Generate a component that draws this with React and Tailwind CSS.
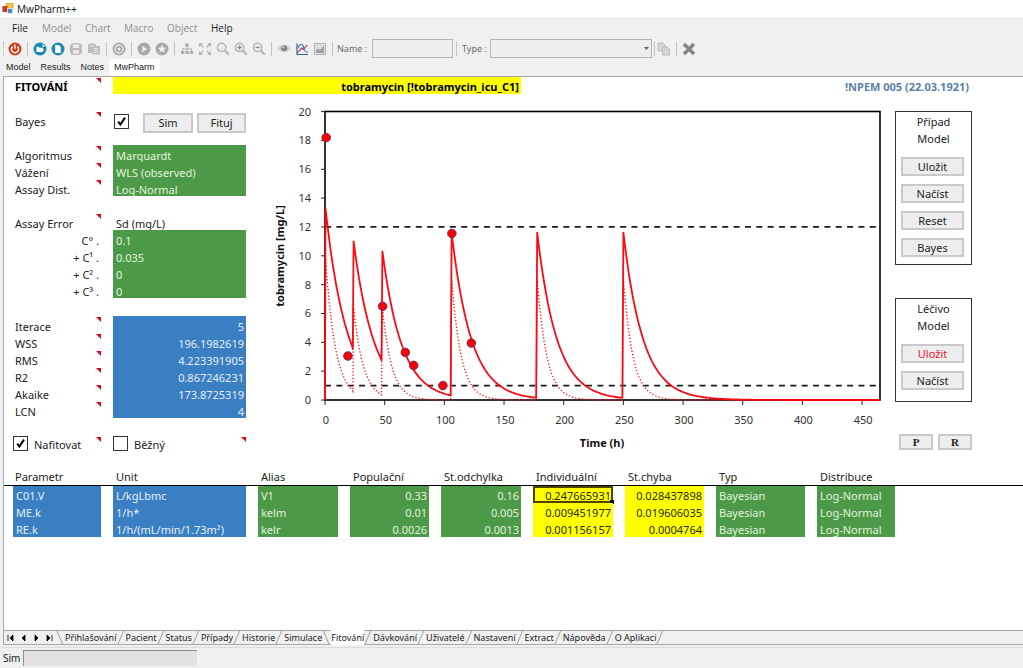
import { useState } from 'react';
import clsx from 'clsx';

const menus = [
  { label: 'File', on: true, cls: 'w-[30px]' },
  { label: 'Model', cls: 'w-[43px]' },
  { label: 'Chart', cls: 'w-[39px]' },
  { label: 'Macro', cls: 'w-[43px]' },
  { label: 'Object', cls: 'w-[44px]' },
  { label: 'Help', on: true, cls: 'w-[30px]' },
];

const views = ['Model', 'Results', 'Notes', 'MwPharm'];

const sheets = [
  'Přihlašování', 'Pacient', 'Status', 'Případy', 'Historie', 'Simulace', 'Fitování',
  'Dávkování', 'Uživatelé', 'Nastavení', 'Extract', 'Nápověda', 'O Aplikaci',
];

const errorTerms = [
  { label: 'C° .', value: '0.1' },
  { label: '+ C¹ .', value: '0.035' },
  { label: '+ C² .', value: '0' },
  { label: '+ C³ .', value: '0' },
];

const stats = [
  { label: 'Iterace', value: '5' },
  { label: 'WSS', value: '196.1982619' },
  { label: 'RMS', value: '4.223391905' },
  { label: 'R2', value: '0.867246231' },
  { label: 'Akaike', value: '173.8725319' },
  { label: 'LCN', value: '4' },
];

const columns = [
  { label: 'Parametr', col: 'w-[109px]', cell: 'bg-[#3a7fc1] text-[#e4eefa]' },
  { label: 'Unit', col: 'w-[145px]', cell: 'bg-[#3a7fc1] text-[#e4eefa]' },
  { label: 'Alias', col: 'w-[92px]', cell: 'bg-[#4c9a48] text-[#e2f3dc]' },
  { label: 'Populační', col: 'w-[91px]', cell: 'bg-[#4c9a48] text-[#e2f3dc] text-right' },
  { label: 'St.odchylka', col: 'w-[92px]', cell: 'bg-[#4c9a48] text-[#e2f3dc] text-right' },
  { label: 'Individuální', col: 'w-[92px]', cell: 'bg-[#ffff00] text-[#2b2b00] text-right' },
  { label: 'St.chyba', col: 'w-[91px]', cell: 'bg-[#ffff00] text-[#2b2b00] text-right' },
  { label: 'Typ', col: 'w-[101px]', cell: 'bg-[#4c9a48] text-[#e2f3dc]' },
  { label: 'Distribuce', col: 'w-[90px]', cell: 'bg-[#4c9a48] text-[#e2f3dc]' },
];

const params = [
  ['C01.V', 'L/kgLbmc', 'V1', '0.33', '0.16', '0.247665931', '0.028437898', 'Bayesian', 'Log-Normal'],
  ['ME.k', '1/h*', 'kelm', '0.01', '0.005', '0.009451977', '0.019606035', 'Bayesian', 'Log-Normal'],
  ['RE.k', '1/h/(mL/min/1.73m²)', 'kelr', '0.0026', '0.0013', '0.001156157', '0.0004764', 'Bayesian', 'Log-Normal'],
];

/* ---------- toolbar ---------- */

function Tool({ label, children }) {
  return (
    <button type="button" aria-label={label} className="flex h-[18px] w-[18px] shrink-0 items-center justify-center">
      <svg width="16" height="16" viewBox="0 0 16 16" fill="none">{children}</svg>
    </button>
  );
}

const Sep = () => <span className="mx-[3px] h-3.5 w-px shrink-0 bg-[#c4c4c4]" />;

function Toolbar() {
  return (
    <div className="flex h-[21px] items-center pl-[3px] text-[#6b6b6b]">
      <span className="mr-0.5 h-3.5 w-px border-l border-dotted border-[#b0b0b0]" />
      <Tool label="Exit">
        <circle cx="8" cy="8" r="6.5" fill="#c8401f" />
        <path d="M5.6 5.4a3.6 3.6 0 1 0 4.8 0M8 3.6v4.2" stroke="#fff" strokeWidth="1.4" />
      </Tool>
      <Sep />
      <Tool label="Open">
        <circle cx="8" cy="8" r="6.5" fill="#1c8ab0" />
        <path d="M4.5 11V5.8h2.2l.8 1h3.3V8M4.5 11l1.2-3H12l-1.4 3z" fill="#fff" />
        <path d="M10 3.6l2.4 1.2L10.6 6" stroke="#fff" />
      </Tool>
      <Tool label="New">
        <circle cx="8" cy="8" r="6.5" fill="#1c8ab0" />
        <path d="M5.2 4h3.6l2 2v6H5.2z" fill="#fff" />
      </Tool>
      <Tool label="Save">
        <rect x="2" y="2" width="12" height="12" rx="4" fill="#bcbcbc" />
        <path d="M5 3.5h6v3.6H5zM5 9.2h6v3.2H5z" fill="#eee" />
      </Tool>
      <Tool label="Save all">
        <path d="M2 3h3V2h3v1h2v2h4v8.5H6V12H2z" fill="#bdbdbd" />
        <path d="M4 4.8h4M7.5 7.5h5M7.5 9.5h5M7.5 11.5h5" stroke="#eee" strokeWidth=".8" />
      </Tool>
      <Sep />
      <Tool label="Record">
        <circle cx="8" cy="8" r="6.5" fill="#a9a9a9" />
        <circle cx="8" cy="8" r="4" stroke="#eee" strokeWidth="1.3" />
        <circle cx="8" cy="8" r="1.5" fill="#eee" />
      </Tool>
      <Sep />
      <Tool label="Run">
        <circle cx="8" cy="8" r="6.5" fill="#a9a9a9" />
        <path d="M6.2 4.8L11 8l-4.8 3.2z" fill="#eee" />
      </Tool>
      <Tool label="Favourite">
        <circle cx="8" cy="8" r="6.5" fill="#a9a9a9" />
        <path d="M8 3.8l1.2 2.8 3 .2-2.3 1.9.8 3L8 10.1l-2.7 1.6.8-3-2.3-1.9 3-.2z" fill="#eee" />
      </Tool>
      <Sep />
      <Tool label="Tree">
        <path d="M6 2.5h4v3H6zM2 10h3.4v3H2zM6.4 10h3.4v3H6.4zM10.8 10h3.4v3h-3.4z" fill="#b0b0b0" />
        <path d="M8 5v5M3.6 10V7.8h8.8V10" stroke="#b0b0b0" />
      </Tool>
      <Tool label="Fit">
        <path d="M2 6V2h4zM10 2h4v4zM2 10v4h4zM14 10v4h-4z" fill="#b4b4b4" />
        <path d="M3 3l3.2 3.2M13 3L9.8 6.2M3 13l3.2-3.2M13 13L9.8 9.8" stroke="#b4b4b4" strokeWidth="1.4" />
      </Tool>
      {['Zoom', 'Zoom in', 'Zoom out'].map((z, i) => (
        <Tool key={z} label={z}>
          <circle cx="6.6" cy="6.4" r="4.2" stroke="#b8b8b8" strokeWidth="1.5" fill="#ececec" />
          <path d="M9.8 9.6l4 4" stroke="#b8b8b8" strokeWidth="2.2" />
          {i > 0 && <path d="M4.4 6.4h4.4" stroke="#909090" strokeWidth="1.3" />}
          {i === 1 && <path d="M6.6 4.2v4.4" stroke="#909090" strokeWidth="1.3" />}
        </Tool>
      ))}
      <Sep />
      <Tool label="Show">
        <path d="M1.5 7.5C4 2.8 12 2.8 14.5 7.5c-2.500 4.500-10.500 4.500-13 0z" fill="#cfcfcf" />
        <circle cx="8.200" cy="7.200" r="3" fill="#868686" />
        <circle cx="7.200" cy="6.200" r="1" fill="#ddd" />
      </Tool>
      <Tool label="Plot">
        <path d="M3 2.5v11h11" stroke="#2c6d83" strokeWidth="1.2" />
        <path d="M3.5 12l4-5 2 1.500L13 4" stroke="#bb2c55" strokeWidth="1.2" />
        <path d="M4 7c1-4.500 5-4.500 5.500-1s2 5 4.500 5.500" stroke="#3d72b5" strokeWidth="1.2" />
      </Tool>
      <Tool label="Picture">
        <rect x="2.5" y="2.5" width="11" height="11" fill="#dcdcdc" stroke="#b4b4b4" />
        <path d="M4 12V9.500l2-2 2 1.600 4-4.400V12z" fill="#a0a0a0" />
      </Tool>
      <Sep />
      <label htmlFor="obj-name" className="w-9 pl-px text-[9px]">Name :</label>
      <input id="obj-name" disabled className="h-[19px] w-[81px] border border-[#b4b4b4] bg-[#eee] px-1 text-[9px]" />
      <Sep />
      <label htmlFor="obj-type" className="w-[30px] pl-0.5 text-[9px]">Type :</label>
      <div className="grid w-[162px] items-center">
        <select id="obj-type" disabled className="col-start-1 row-start-1 h-[19px] w-full appearance-none border border-[#b4b4b4] bg-[#eee] text-[9px] opacity-100">
          <option></option>
        </select>
        <svg width="5" height="3" className="col-start-1 row-start-1 mr-[3px] justify-self-end"><path d="M0 0h5L2.5 3z" fill="#666" /></svg>
      </div>
      <span className="ml-0.5 h-3.5 w-px shrink-0 bg-[#c4c4c4]" />
      <Tool label="Copy">
        <path d="M2 2h5l2 2v6H2z" fill="#d5d5d5" stroke="#bdbdbd" />
        <path d="M6.5 6h5l2 2v6h-7z" fill="#d5d5d5" stroke="#bdbdbd" />
      </Tool>
      <Sep />
      <Tool label="Delete">
        <path d="M3 3l10 10M13 3L3 13" stroke="#858585" strokeWidth="3.4" />
      </Tool>
    </div>
  );
}

/* ---------- sheet cells ---------- */

const Marker = () => (
  <svg width="5" height="5" viewBox="0 0 5 5" className="absolute top-px right-0"><path d="M0 0h5v5z" fill="#e3001d" /></svg>
);

function Label({ children, note, right }) {
  return (
    <div className={clsx('relative h-[17px] w-[88px] leading-[21px]', right ? 'pr-0.5 text-right' : 'pl-0.5')}>
      {children}
      {note && <Marker />}
    </div>
  );
}

function Row({ label, note, right, cell, children }) {
  return (
    <div className="flex h-[17px] gap-3">
      <Label note={note} right={right}>{label}</Label>
      <div className={clsx('h-[17px] w-[133px] overflow-hidden px-0.5 pl-[3px] leading-[21px]', cell)}>{children}</div>
    </div>
  );
}

function Check({ id, label, checked, onChange }) {
  return (
    <span className="grid h-[15px] w-[15px] shrink-0">
      <input id={id} type="checkbox" aria-label={label} checked={checked} onChange={e => onChange(e.target.checked)}
        className="col-start-1 row-start-1 h-[15px] w-[15px] appearance-none border border-[#333] bg-white" />
      {checked && (
        <svg viewBox="0 0 15 15" className="pointer-events-none col-start-1 row-start-1 h-[15px] w-[15px]" fill="none">
          <path d="M4.2 7.6l2.2 3 4.6-7" stroke="#000" strokeWidth="2" />
        </svg>
      )}
    </span>
  );
}

function Button({ className, children }) {
  return (
    <button type="button" className={clsx('border-2 border-[#c9c9c9] bg-[#eee] text-center', className)}>{children}</button>
  );
}

function Settings() {
  const [bayes, setBayes] = useState(true);
  const [fit, setFit] = useState(true);
  const [common, setCommon] = useState(false);
  const green = 'bg-[#4c9a48] text-[#e2f3dc]';

  return (
    <div className="w-[242px] shrink-0 pt-[17px] pl-[9px]">
      <div className="flex h-[34px] gap-3">
        <Label note>Bayes</Label>
        <div className="flex w-[133px] items-start pl-px">
          <div className="mt-[3px] mr-3.5"><Check id="bayes" label="Bayes" checked={bayes} onChange={setBayes} /></div>
          <Button className="mt-0.5 mr-1 h-5 w-[50px] leading-[16px]">Sim</Button>
          <Button className="mt-0.5 h-5 w-[49px] leading-[16px]">Fituj</Button>
        </div>
      </div>

      <Row label="Algoritmus" note cell={green}>Marquardt</Row>
      <Row label="Vážení" note cell={green}>WLS (observed)</Row>
      <Row label="Assay Dist." note cell={green}>Log-Normal</Row>

      <div className="pt-[17px]">
        <Row label="Assay Error" note>Sd (mg/L)</Row>
        {errorTerms.map(t => <Row key={t.label} label={t.label} right cell={green}>{t.value}</Row>)}
      </div>

      <div className="pt-[18px]">
        {stats.map(s => (
          <Row key={s.label} label={s.label} note cell="bg-[#3a7fc1] text-[#e4eefa] text-right">{s.value}</Row>
        ))}
      </div>

      <div className="flex gap-3 pt-[18px]">
        <div className="relative flex h-[17px] w-[88px] items-start">
          <Check id="fit" checked={fit} onChange={setFit} />
          <label htmlFor="fit" className="pl-1.5 leading-[18px]">Nafitovat</label>
          <Marker />
        </div>
        <div className="relative flex h-[17px] w-[133px] items-start">
          <Check id="common" checked={common} onChange={setCommon} />
          <label htmlFor="common" className="pl-1.5 leading-[18px]">Běžný</label>
          <Marker />
        </div>
      </div>
    </div>
  );
}

/* ---------- chart ---------- */

const px = t => 79 + t * 1.1935;
const py = c => 306 - c * 14.42;

const doses = [
  { t: 0, end: 23.3, peak: 13.3, k: 0.0568, low: 9.8, kl: 0.119 },
  { t: 23.6, end: 47.3, peak: 11, k: 0.0585, low: 6.4, kl: 0.122 },
  { t: 47.7, end: 105.3, peak: 10.3, k: 0.061, low: 6.4, kl: 0.128 },
  { t: 105.7, end: 177, peak: 11.6, k: 0.061, low: 8.4, kl: 0.126 },
  { t: 177.4, end: 249.2, peak: 11.6, k: 0.061, low: 8.4, kl: 0.126 },
  { t: 249.6, end: 465, peak: 11.6, k: 0.061, low: 8.4, kl: 0.126 },
];

const samples = [[1, 18.2], [19.2, 3.05], [48.3, 6.5], [67.3, 3.3], [74.3, 2.4], [98.8, 1], [106.3, 11.55], [122.6, 3.95]];

function curve(peak, k) {
  const pts = [[0, 0]];
  doses.forEach(d => {
    for (let s = 0; s <= d.end - d.t; s += 1.5) {
      pts.push([d.t + 0.4 + s, d[peak] * Math.exp(-d[k] * s)]);
    }
    pts.push([d.end, d[peak] * Math.exp(-d[k] * (d.end - d.t))]);
  });
  return pts.map(([t, c]) => `${px(t).toFixed(1)},${py(c).toFixed(1)}`).join(' ');
}

function Chart() {
  return (
    <svg viewBox="0 0 649 370" className="min-w-0 flex-1 self-start text-[11px]" role="img" aria-label="tobramycin concentration over time">
      <rect x="79" y="17.5" width="555" height="288.5" fill="none" stroke="#000" strokeWidth="1.6" />
      {[0, 2, 4, 6, 8, 10, 12, 14, 16, 18, 20].map(c => (
        <g key={c}>
          <line x1="75" x2="79" y1={py(c)} y2={py(c)} stroke="#222" />
          <text x="65" y={py(c) + 4} textAnchor="end" fill="#333">{c}</text>
        </g>
      ))}
      {[0, 50, 100, 150, 200, 250, 300, 350, 400, 450].map(t => (
        <g key={t}>
          <line x1={px(t)} x2={px(t)} y1="306" y2="311" stroke="#222" />
          <text x={px(t) + 1} y="330" textAnchor="middle" fill="#333">{t}</text>
        </g>
      ))}
      {[12, 1].map(c => (
        <line key={c} x1="79" x2="632" y1={py(c)} y2={py(c)} stroke="#1c1c1c" strokeWidth="1.8" strokeDasharray="6 5.35" />
      ))}
      <polyline points={curve('low', 'kl')} fill="none" stroke="#ff1020" strokeWidth="1.3" strokeDasharray="1.3 2" />
      <polyline points={curve('peak', 'k')} fill="none" stroke="#fa0a12" strokeWidth="1.8" strokeLinejoin="round" />
      {samples.map(([t, c]) => (
        <circle key={t} cx={px(t)} cy={py(c)} r="4.3" fill="#fb0006" stroke="#6b3a5c" strokeWidth="1" />
      ))}
      <text x="356" y="353" textAnchor="middle" className="font-bold" fill="#111">Time (h)</text>
      <text transform="translate(38 162) rotate(-90)" textAnchor="middle" className="font-bold" fill="#111">tobramycin [mg/L]</text>
    </svg>
  );
}

/* ---------- right side ---------- */

function SideBox({ title, actions, className }) {
  return (
    <div className={clsx('border border-[#333] px-[5px] text-center', className)}>
      <p className="pt-px leading-[17px]">{title}<br />Model</p>
      <div className="mt-2.5 flex flex-col gap-2">
        {actions.map(a => (
          <Button key={a.label} className={clsx('h-[19px] w-[63px] leading-[16px]', a.red && 'text-[#f0142a]')}>{a.label}</Button>
        ))}
      </div>
    </div>
  );
}

function ModelPanel() {
  return (
    <div className="mr-[51px] w-[77px] shrink-0 pt-[17px]">
      <SideBox title="Případ" className="h-[154px]"
        actions={[{ label: 'Uložit' }, { label: 'Načíst' }, { label: 'Reset' }, { label: 'Bayes' }]} />
      <SideBox title="Léčivo" className="mt-[33px] h-[104px]"
        actions={[{ label: 'Uložit', red: true }, { label: 'Načíst' }]} />
      <div className="mt-8 flex justify-end gap-[5px] font-['Liberation_Serif',serif] text-[11px] font-bold">
        <Button className="h-4 w-[34px] leading-[13px]">P</Button>
        <Button className="h-4 w-[34px] leading-[13px]">R</Button>
      </div>
    </div>
  );
}

/* ---------- parameter table ---------- */

function ParamTable() {
  return (
    <table className="w-full table-fixed border-separate border-spacing-0">
      <thead>
        <tr>
          {columns.map((c, i) => (
            <th key={c.label} scope="col"
              className={clsx('h-[17px] border-b border-black p-0 text-left font-normal leading-[16px]', i === 0 ? 'pl-[11px]' : 'pl-[3px]', c.col)}>
              {c.label}
            </th>
          ))}
          <td className="border-b border-black p-0" />
        </tr>
      </thead>
      <tbody>
        {params.map((row, r) => (
          <tr key={row[0]}>
            {row.map((value, i) => {
              const selected = r === 0 && i === 5;
              return (
                <td key={i} className={clsx('p-0 pr-3', i === 0 && 'pl-[9px]')}>
                  <div className={clsx('relative h-[17px] pr-0.5 pl-[3px] leading-[19px]', columns[i].cell, selected && 'outline-2 -outline-offset-2 outline-[#4d4400]')}>
                    {value}
                    {selected && <span className="absolute -right-px -bottom-px h-1 w-1 bg-black" />}
                  </div>
                </td>
              );
            })}
            <td />
          </tr>
        ))}
      </tbody>
    </table>
  );
}

/* ---------- bottom ---------- */

const Slash = ({ back }) => (
  <svg width="9" height="14" viewBox="0 0 9 14" className="shrink-0" fill="none">
    <path d={back ? 'M1 0l6 14' : 'M7 0L1 14'} stroke="#a0a0a0" />
  </svg>
);

function SheetTabs({ active, onSelect }) {
  const arrows = [
    ['First', 'M1 1v6M6 1L3 4l3 3z'],
    ['Previous', 'M5 1L2 4l3 3z'],
    ['Next', 'M2 1l3 3-3 3z'],
    ['Last', 'M1 1l3 3-3 3zM6 1v6'],
  ];
  return (
    <div className="flex h-[15px] items-center border-y border-[#a8a8a8] bg-[#f0f0f0] text-[9px] text-[#222]">
      {arrows.map(([name, d]) => (
        <button key={name} type="button" aria-label={name} className="flex w-[13px] justify-center">
          <svg width="8" height="8" viewBox="0 0 8 8"><path d={d} fill="#000" stroke="#000" strokeWidth=".8" /></svg>
        </button>
      ))}
      <Slash back />
      {sheets.map((s, i) => (
        <div key={s} className="flex">
          <button type="button" onClick={() => onSelect(s)}
            className={clsx('h-[15px] leading-[14px]', s === active && 'bg-white')}>
            {s}
          </button>
          <Slash back={sheets[i + 1] === active} />
        </div>
      ))}
    </div>
  );
}

export default function App() {
  const [view, setView] = useState('MwPharm');
  const [sheet, setSheet] = useState('Fitování');

  return (
    <div className="flex min-h-screen flex-col bg-[#f0f0f0] font-['Noto_Sans','Open_Sans',sans-serif] text-[11px] text-[#222]">
      <header className="flex h-[19px] items-center gap-[3px] border-b border-[#e4e4e4] bg-white pl-0.5 text-[10px]">
        <svg width="12" height="12" viewBox="0 0 12 12">
          <rect x="4" y="0.5" width="7" height="6" fill="#f6c63c" stroke="#c08a20" strokeWidth="0.6" />
          <rect x="0.5" y="3" width="5" height="6" fill="#cf3527" />
          <rect x="5.5" y="5.5" width="5" height="5" fill="#4f86cf" stroke="#fff" strokeWidth="0.6" />
        </svg>
        MwPharm++
      </header>

      <nav className="flex h-[19px] items-center pl-3 font-['Open_Sans',sans-serif] text-[10px]">
        {menus.map(m => (
          <button key={m.label} type="button" className={clsx('text-left', m.cls, m.on ? 'text-[#1c1c1c]' : 'text-[#8f8f8f]')}>{m.label}</button>
        ))}
      </nav>

      <Toolbar />

      <div className="flex h-[17px] pl-px font-['Liberation_Sans',Arial,sans-serif] text-[9px]">
        {views.map(v => (
          <button key={v} type="button" onClick={() => setView(v)}
            className={clsx('px-[5px] leading-[17px]', v === view && 'bg-white')}>
            {v}
          </button>
        ))}
      </div>

      <main className="ml-[3px] flex flex-1 flex-col border-t border-l border-[#a8a8a8] bg-white">
        <div className="flex h-[17px] pl-[9px] font-bold leading-[20px] text-black">
          <div className="relative w-[88px] pl-0.5">FITOVÁNÍ<Marker /></div>
          <div className="ml-3 w-[408px] bg-[#ffff00] pr-0.5 text-right">tobramycin [!tobramycin_icu_C1]</div>
          <div className="mr-[54px] flex-1 text-right text-[#5b7fa8]">!NPEM 005 (22.03.1921)</div>
        </div>
        <div className="flex h-[375px]">
          <Settings />
          <Chart />
          <ModelPanel />
        </div>
        <ParamTable />
        <div className="flex-1" />
        <SheetTabs active={sheet} onSelect={setSheet} />
      </main>

      <footer className="mt-0.5 flex h-[21px] items-center gap-[3px] border-t border-[#dcdcdc] pl-[3px] text-[10px]">
        <span id="job">Sim</span>
        <div role="progressbar" aria-labelledby="job" className="h-4 w-[174px] border-t border-l border-[#909090] bg-[#e2e2e2]" />
      </footer>
    </div>
  );
}
